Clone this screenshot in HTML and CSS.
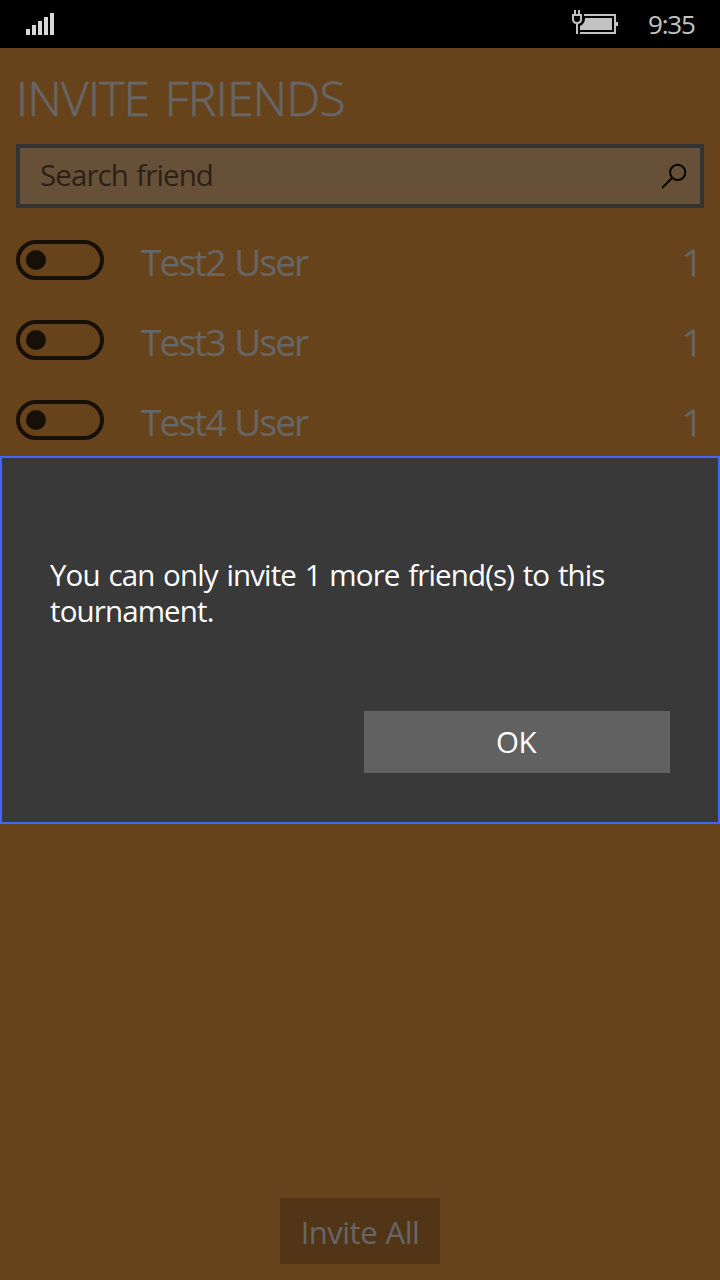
FILE: index.html
```html
<!DOCTYPE html>
<html lang="en">
<head>
<meta charset="utf-8">
<title>Invite Friends</title>
<link rel="stylesheet" href="styles.css">
</head>
<body>
<div class="phone">
  <header class="status">
    <svg class="signal" width="28" height="22" viewBox="0 0 28 22" fill="#d8d8d8"><path d="M0 16h4v6H0zM6 12h4v10H6zM12 8h4v14h-4zM18 4h4v18h-4zM24 0h4v22h-4z"/></svg>
    <svg class="battery" width="48" height="26" viewBox="0 0 48 26"><path d="M12 5h31v18H8" fill="none" stroke="#c3c3c3" stroke-width="2"/><path d="M13 8h27v12H8v-4q5-2 5-8zM44 12h2v4h-2zM2 0h2v5H2zM6 0h2v5H6z" fill="#c3c3c3"/><path d="M0 5h10M1 5v4q0 4 4 4t4-4V5M5 13v11" fill="none" stroke="#c3c3c3" stroke-width="2"/></svg>
    <time class="clock">9:35</time>
  </header>
  <main class="page">
    <h1 class="title">INVITE FRIENDS</h1>
    <div class="search">
      <span class="search-text">Search friend</span>
      <svg width="26" height="26" viewBox="0 0 26 26" fill="none" stroke="#080501" stroke-width="2"><circle cx="16.7" cy="9.3" r="7.6"/><path d="M11.2 14.8 1.3 24.7"/></svg>
    </div>
    <ul class="friends">
      <li class="friend"><span class="toggle"></span><span class="name">Test2 User</span><span class="count">1</span></li>
      <li class="friend"><span class="toggle"></span><span class="name">Test3 User</span><span class="count">1</span></li>
      <li class="friend"><span class="toggle"></span><span class="name">Test4 User</span><span class="count">1</span></li>
    </ul>
    <button class="invite">Invite All</button>
  </main>
  <section class="dialog" role="dialog">
    <p class="message">You can only invite 1 more friend(s) to this tournament.</p>
    <button class="ok">OK</button>
  </section>
</div>
</body>
</html>
```
FILE: styles.css
```css
* { box-sizing: border-box; }
body { margin: 0; font-family: "Open Sans", "Noto Sans", sans-serif; }
button { border: 0; padding: 0; font-family: inherit; }
.phone { position: relative; width: 720px; height: 1280px; display: flex; flex-direction: column; background: #66431b; overflow: hidden; }
.status { flex: none; height: 48px; background: #000; display: flex; align-items: flex-start; padding: 0 25px 0 26px; }
.signal { margin-top: 13px; }
.battery { margin: 10px 0 0 auto; }
.clock { width: 47px; margin-left: 28px; margin-top: 6px; font-size: 26px; line-height: 36px; color: #c3c3c3; letter-spacing: -1.2px; white-space: nowrap; }
.page { flex: 1; display: flex; flex-direction: column; padding: 16px; }
.title { margin: 0; height: 80px; font-size: 47.5px; font-weight: 300; line-height: 68px; letter-spacing: -.55px; word-spacing: 3.5px; color: #666; -webkit-text-stroke: .7px #666; white-space: nowrap; }
.search { height: 64px; border: 4px solid #333; background: #665138; display: flex; align-items: center; justify-content: space-between; padding: 0 13px 0 20px; font-size: 29.5px; line-height: 40px; letter-spacing: -.9px; word-spacing: 1.5px; color: #2c2117; }
.search-text { padding-bottom: 3px; }
.friends { list-style: none; margin: 12px 0 0; padding: 0; }
.friend { height: 80px; display: flex; align-items: center; color: #666; font-size: 37px; line-height: 50px; }
.toggle { width: 88px; height: 40px; border: 4px solid #171006; border-radius: 20px; display: flex; align-items: center; padding-left: 6px; }
.toggle::before { content: ""; width: 20px; height: 20px; border-radius: 50%; background: #171006; }
.name { margin-left: 37px; padding-top: 4px; letter-spacing: -1.9px; word-spacing: 2px; white-space: nowrap; }
.count { margin-left: auto; margin-right: 1px; padding-top: 4px; font-weight: 300; -webkit-text-stroke: 1px #666; }
.invite { width: 160px; height: 66px; margin: auto auto 0; padding-top: 3px; background: #523517; color: #666; font-size: 31px; line-height: 63px; letter-spacing: -.5px; word-spacing: 1px; white-space: nowrap; }
.dialog { position: absolute; left: 0; top: 456px; width: 720px; height: 368px; border: 2px solid #3f66ff; background: #393939; padding: 99px 48px 49px; display: flex; flex-direction: column; justify-content: space-between; align-items: flex-end; }
.message { width: 100%; margin: 0; color: #fff; font-size: 29.5px; line-height: 36px; letter-spacing: -.87px; word-spacing: 1.9px; }
.ok { width: 306px; height: 62px; padding-right: 2px; background: #616161; color: #fff; font-size: 29.5px; line-height: 62px; letter-spacing: -.5px; }
```
